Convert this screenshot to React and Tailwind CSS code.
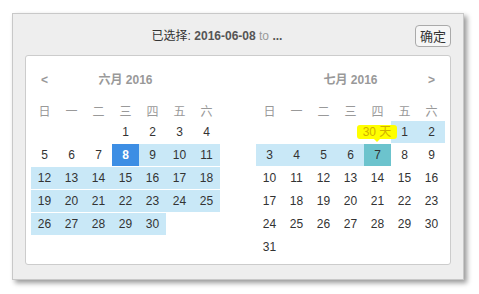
import React from 'react';

const WEEK = ['日', '一', '二', '三', '四', '五', '六'];

const june = [
    [null, null, null, 1, 2, 3, 4],
    [5, 6, 7, 8, 9, 10, 11],
    [12, 13, 14, 15, 16, 17, 18],
    [19, 20, 21, 22, 23, 24, 25],
    [26, 27, 28, 29, 30, null, null],
    [null, null, null, null, null, null, null],
];

const july = [
    [null, null, null, null, null, 1, 2],
    [3, 4, 5, 6, 7, 8, 9],
    [10, 11, 12, 13, 14, 15, 16],
    [17, 18, 19, 20, 21, 22, 23],
    [24, 25, 26, 27, 28, 29, 30],
    [31, null, null, null, null, null, null],
];

const juneState = (d) => {
    if (d === 8) return 'start';
    if (d > 8) return 'range';
    return '';
};

const julyState = (d) => {
    if (d === 7) return 'hover';
    if (d < 7) return 'range';
    return '';
};

const cellClass = {
    '': 'text-[#333]',
    range: 'bg-[#c9e8f7] text-[#333]',
    start: 'bg-[#3d8ee4] text-white font-bold',
    hover: 'bg-[#6cc3cd] text-[#333]',
};

const Month = ({ title, weeks, stateOf, prev, next, children }) => (
    <div className="w-[189px]">
        <div className="grid grid-cols-[repeat(7,27px)] h-[22px] items-center text-[12px] font-bold text-[#999]">
            <div className="text-center">{prev ? '<' : ''}</div>
            <div className="col-span-5 text-center">{title}</div>
            <div className="text-center">{next ? '>' : ''}</div>
        </div>
        <div className="grid grid-cols-[repeat(7,27px)] mt-[11px] h-[19px] items-center text-[12px] text-[#999]">
            {WEEK.map((w) => (
                <div key={w} className="text-center">{w}</div>
            ))}
        </div>
        <div className="relative flex flex-col gap-px">
            {weeks.map((row, i) => (
                <div key={i} className="grid grid-cols-[repeat(7,27px)] h-[22px]">
                    {row.map((d, j) => (
                        <div
                            key={j}
                            className={`flex items-center justify-center text-[12px] ${d ? cellClass[stateOf(d)] : ''}`}
                        >
                            {d || ''}
                        </div>
                    ))}
                </div>
            ))}
            {children}
        </div>
    </div>
);

export default function App() {
    return (
        <div
            className="w-[479px] h-[294px] bg-white pt-[13px] pl-[12px]"
            style={{ fontFamily: '"Liberation Sans", Arial, "Noto Sans CJK SC", sans-serif' }}
        >
            <div className="w-[452px] border border-[#c8c8c8] bg-[#eeeeee] px-[12px] pb-[14px] shadow-[3px_3px_5px_rgba(0,0,0,0.4)]">
                <div className="flex items-center gap-[6px] pt-[11px] pb-[8px]">
                    <div className="flex-1 text-center text-[12px] text-[#333]">
                        已选择: <span className="font-bold text-[#555]">2016-06-08</span>{' '}
                        <span className="text-[#999]">to</span>{' '}
                        <span className="font-bold text-[#555]">...</span>
                    </div>
                    <button className="w-[36px] h-[22px] rounded-[4px] border border-[#aaa] bg-[#f6f6f6] text-[13px] text-[#333] leading-none">
                        确定
                    </button>
                </div>
                <div className="flex gap-[36px] rounded-[3px] border border-[#ccc] bg-white pl-[5px] pr-[6px] pt-[13px] pb-[6px]">
                    <Month title="六月 2016" weeks={june} stateOf={juneState} prev />
                    <Month title="七月 2016" weeks={july} stateOf={julyState} next>
                        <div className="absolute top-[4px] left-[101px] w-[40px] h-[14px] rounded-[3px] bg-[#ffff00] text-center text-[12px] leading-[14px] text-[#d2b000]">
                            30 天
                            <span className="absolute left-1/2 top-full -ml-[3px] border-x-[3px] border-t-[3px] border-x-transparent border-t-[#ffff00]" />
                        </div>
                    </Month>
                </div>
            </div>
        </div>
    );
}
